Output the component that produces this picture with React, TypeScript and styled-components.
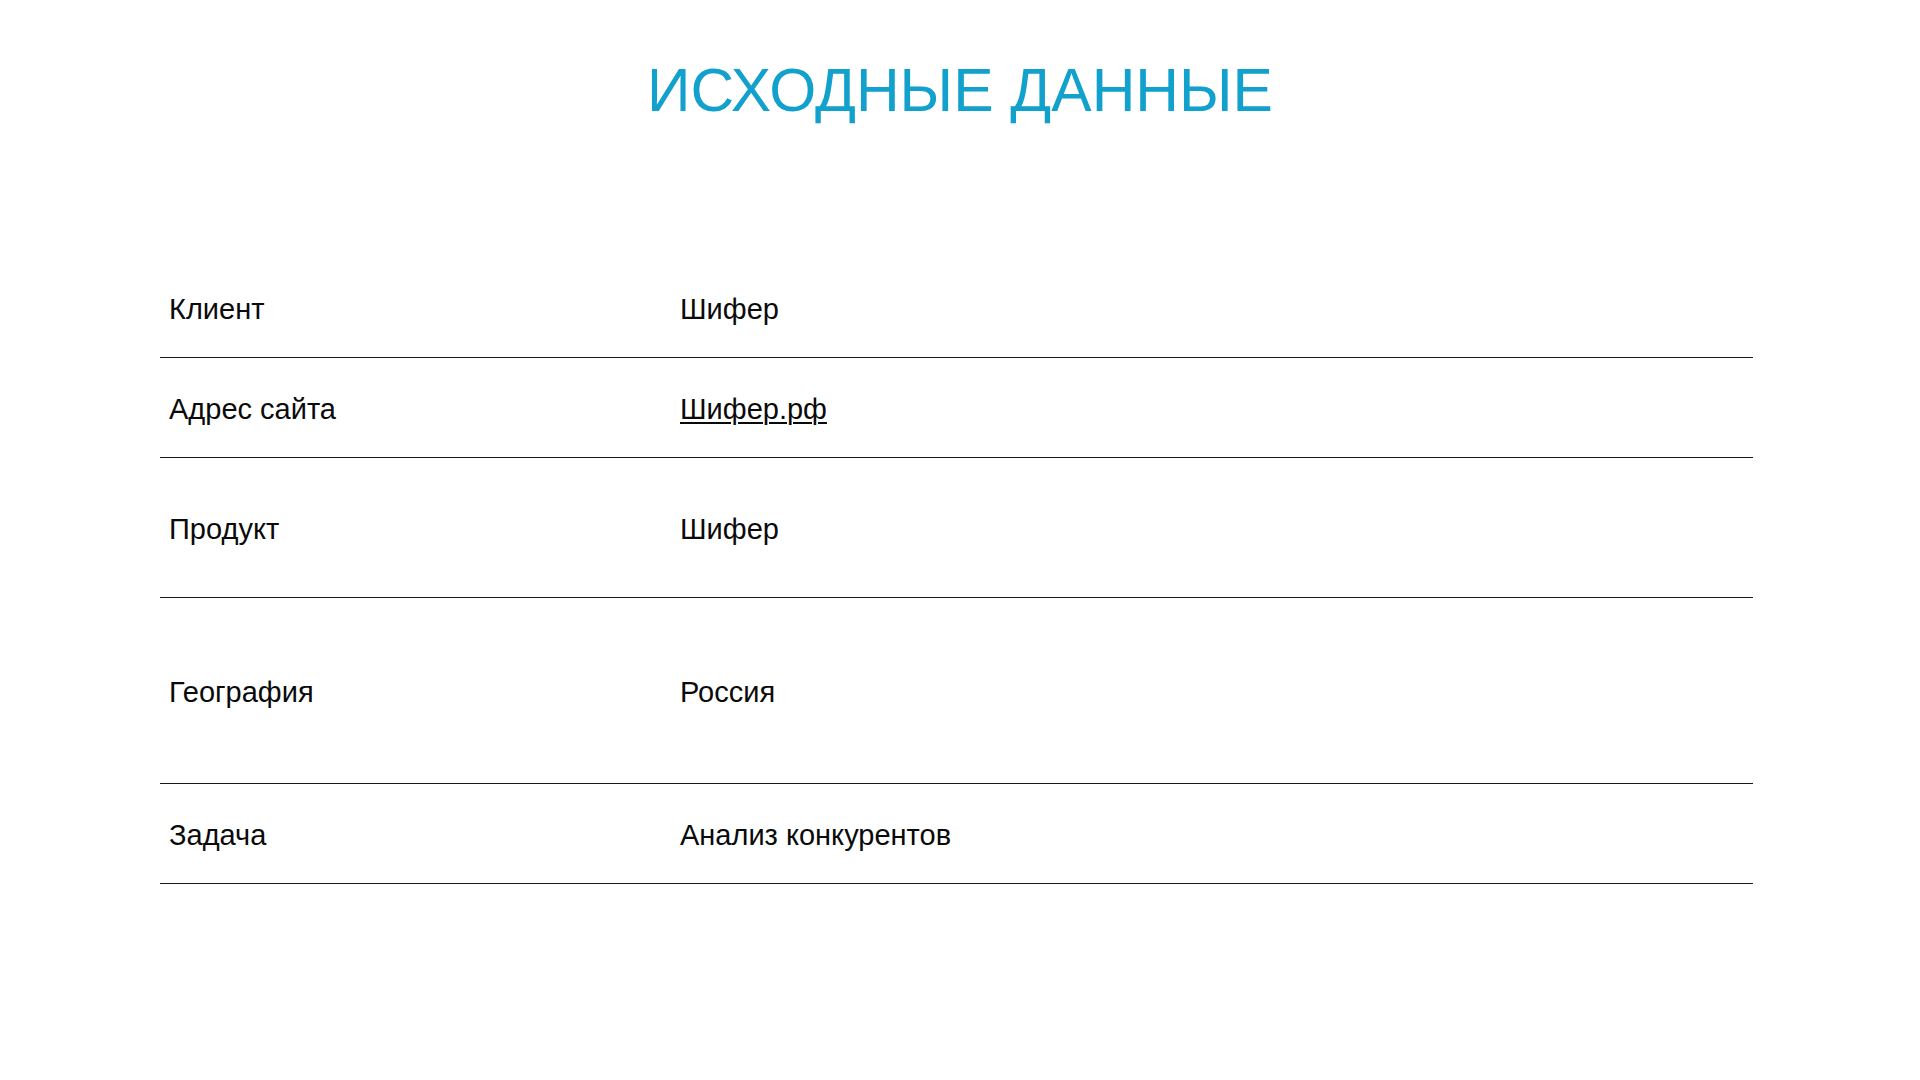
import React from "react";
import styled, { createGlobalStyle } from "styled-components";

const GlobalStyle = createGlobalStyle`
  html, body {
    margin: 0;
    padding: 0;
    background: #ffffff;
  }
  body {
    font-family: "Liberation Sans", Arial, sans-serif;
  }
`;

const Page = styled.div`
  width: 1920px;
  height: 1080px;
  background: #ffffff;
  display: flex;
  flex-direction: column;
  box-sizing: border-box;
  padding-top: 60px;
`;

const Title = styled.h1`
  margin: 0;
  align-self: center;
  font-family: "Liberation Sans", Arial, sans-serif;
  font-weight: 400;
  font-size: 60.5px;
  line-height: 60px;
  color: #12a0cd;
`;

const Table = styled.div`
  margin-top: 138px;
  margin-left: 160px;
  width: 1593px;
  display: flex;
  flex-direction: column;
`;

const Row = styled.div<{ $h: number }>`
  display: grid;
  grid-template-columns: 511px 1fr;
  align-items: center;
  height: ${(p) => p.$h}px;
  box-sizing: border-box;
  padding-top: 2px;
  border-bottom: 1px solid #1a1a1a;
`;

const Cell = styled.div`
  padding-left: 9px;
  font-family: "Liberation Sans", Arial, sans-serif;
  font-size: 29px;
  line-height: 34px;
  color: #0a0a0a;
`;

const Link = styled.span`
  text-decoration: underline;
  text-underline-offset: 3px;
  text-decoration-thickness: 2px;
`;

const rows: { label: string; value: React.ReactNode; h: number }[] = [
  { label: "Клиент", value: "Шифер", h: 100 },
  { label: "Адрес сайта", value: <Link>Шифер.рф</Link>, h: 100 },
  { label: "Продукт", value: "Шифер", h: 140 },
  { label: "География", value: "Россия", h: 186 },
  { label: "Задача", value: "Анализ конкурентов", h: 100 },
];

export default function App() {
  return (
    <>
      <GlobalStyle />
      <Page>
        <Title>ИСХОДНЫЕ ДАННЫЕ</Title>
        <Table>
          {rows.map((r) => (
            <Row key={r.label} $h={r.h}>
              <Cell>{r.label}</Cell>
              <Cell>{r.value}</Cell>
            </Row>
          ))}
        </Table>
      </Page>
    </>
  );
}
